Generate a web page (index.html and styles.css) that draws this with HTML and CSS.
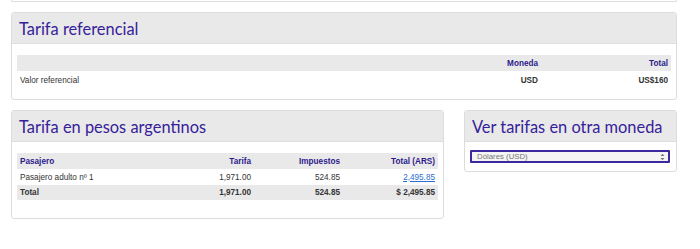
FILE: index.html
```html
<!DOCTYPE html>
<html lang="es">
<head>
    <meta charset="UTF-8">
    <meta name="viewport" content="width=device-width, initial-scale=1.0">
    <title>Tarifas</title>
    <link rel="stylesheet" href="styles.css">
</head>
<body>
    <div class="page">
        <div class="panel-tail"></div>

        <div class="panel">
            <div class="panel-header">
                <h2>Tarifa referencial</h2>
            </div>
            <div class="panel-body ref-body">
                <table class="fares">
                    <colgroup>
                        <col>
                        <col class="col-currency">
                        <col class="col-total">
                    </colgroup>
                    <tr class="head">
                        <th></th>
                        <th class="num">Moneda</th>
                        <th class="num">Total</th>
                    </tr>
                    <tr>
                        <td>Valor referencial</td>
                        <td class="num strong">USD</td>
                        <td class="num strong">US$160</td>
                    </tr>
                </table>
            </div>
        </div>

        <div class="row">
            <div class="panel panel-wide">
                <div class="panel-header">
                    <h2>Tarifa en pesos argentinos</h2>
                </div>
                <div class="panel-body ars-body">
                    <table class="fares">
                        <colgroup>
                            <col>
                            <col class="col-fare">
                            <col class="col-tax">
                            <col class="col-sum">
                        </colgroup>
                        <tr class="head">
                            <th>Pasajero</th>
                            <th class="num">Tarifa</th>
                            <th class="num">Impuestos</th>
                            <th class="num">Total (ARS)</th>
                        </tr>
                        <tr>
                            <td>Pasajero adulto nº 1</td>
                            <td class="num">1,971.00</td>
                            <td class="num">524.85</td>
                            <td class="num"><a href="#">2,495.85</a></td>
                        </tr>
                        <tr class="total">
                            <td>Total</td>
                            <td class="num">1,971.00</td>
                            <td class="num">524.85</td>
                            <td class="num">$ 2,495.85</td>
                        </tr>
                    </table>
                </div>
            </div>

            <div class="panel panel-side">
                <div class="panel-header">
                    <h2>Ver tarifas en otra moneda</h2>
                </div>
                <div class="panel-body currency-body">
                    <div class="select-wrap">
                        <select class="currency">
                            <option>Dólares (USD)</option>
                            <option>Pesos argentinos (ARS)</option>
                            <option>Euros (EUR)</option>
                        </select>
                        <svg class="select-arrows" width="5" height="8" viewBox="0 0 5 8">
                            <path d="M0.5 3 L2.5 0.8 L4.5 3 Z M0.5 5 L2.5 7.2 L4.5 5 Z" fill="#777"/>
                        </svg>
                    </div>
                </div>
            </div>
        </div>
    </div>
</body>
</html>
```

FILE: styles.css
```css
body {
    margin: 0;
    padding: 0;
    background-color: #fff;
    font-family: "Liberation Sans", Arial, sans-serif;
    color: #333;
}

.page {
    width: 666px;
    padding-left: 11px;
}

.panel-tail {
    height: 1px;
    border: 1px solid #dcdcdc;
    border-top: none;
    border-radius: 0 0 3px 3px;
    margin-bottom: 10px;
}

.panel {
    border: 1px solid #dcdcdc;
    border-radius: 3px;
    background-color: #fff;
}

.panel-header {
    background-color: #e9e9e9;
    border-bottom: 1px solid #dedede;
    border-radius: 3px 3px 0 0;
    height: 30px;
    padding: 0 7px;
}

.panel-header h2 {
    margin: 0;
    font-family: Lato, "Open Sans", sans-serif;
    font-weight: 400;
    font-size: 16.4px;
    line-height: 31px;
    color: #35219a;
    white-space: nowrap;
}

.panel-body {
    padding: 11px 5px 0 5px;
}

.ref-body {
    height: 44px;
}

.ars-body {
    height: 65px;
}

.currency-body {
    height: 21px;
    padding-top: 8px;
}

.row {
    display: flex;
    gap: 20px;
    margin-top: 10px;
    align-items: flex-start;
}

.panel-wide {
    width: 431px;
}

.panel-side {
    flex: 1;
}

.fares {
    width: 100%;
    border-collapse: collapse;
    font-size: 8.2px;
}

.fares th,
.fares td {
    padding: 0 3px;
    height: 16px;
    text-align: left;
    white-space: nowrap;
}

.fares .head th {
    background-color: #e9e9e9;
    color: #2c1a8c;
    font-weight: bold;
    height: 16px;
}

.fares .num {
    text-align: right;
}

.fares .strong {
    font-weight: bold;
}

.ref-body .fares td {
    height: 19px;
}

.fares .total td {
    background-color: #e9e9e9;
    font-weight: bold;
    height: 15px;
}

.fares a {
    color: #2d6fd0;
}

.col-currency {
    width: 127px;
}

.col-total {
    width: 130px;
}

.col-fare {
    width: 90px;
}

.col-tax {
    width: 89px;
}

.col-sum {
    width: 95px;
}

.select-wrap {
    position: relative;
    margin-right: 1px;
}

.currency {
    appearance: none;
    -webkit-appearance: none;
    display: block;
    width: 100%;
    height: 13px;
    margin: 0;
    padding: 0 0 0 5px;
    border: 2px solid #3b2a9e;
    border-radius: 1px;
    background-color: #f4f4f4;
    font-family: "Liberation Sans", Arial, sans-serif;
    font-size: 7.8px;
    line-height: 9px;
    color: #777;
    outline: none;
}

.select-arrows {
    position: absolute;
    right: 5px;
    top: 2.5px;
}
```
